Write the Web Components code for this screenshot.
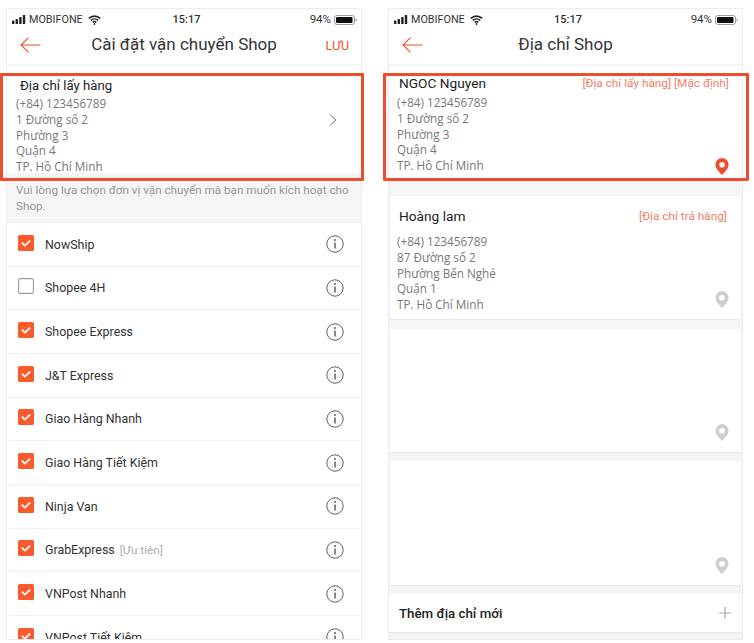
<!DOCTYPE html>
<html lang="vi">
<head>
<meta charset="utf-8">
<title>Shop</title>
<style>
	html, body { margin: 0; background: #fff; }
	body { font-family: Roboto, "Noto Sans", sans-serif; color: #222; }
	main { display: flex; gap: 26px; padding: 8px 0 0 6px; }
</style>
</head>
<body>
<main>
	<phone-frame style="--w: 356px">
		<status-bar></status-bar>
		<nav-bar action="LƯU">Cài đặt vận chuyển Shop</nav-bar>
		<pickup-row>
			<span slot="title">Địa chỉ lấy hàng</span>
			(+84) 123456789<br>1 Đường số 2<br>Phường 3<br>Quận 4<br>TP. Hồ Chí Minh
		</pickup-row>
		<hint-box>Vui lòng lựa chọn đơn vị vận chuyển mà bạn muốn kích hoạt cho Shop.</hint-box>
		<carrier-row checked>NowShip</carrier-row>
		<carrier-row>Shopee 4H</carrier-row>
		<carrier-row checked>Shopee Express</carrier-row>
		<carrier-row checked>J&amp;T Express</carrier-row>
		<carrier-row checked>Giao Hàng Nhanh</carrier-row>
		<carrier-row checked>Giao Hàng Tiết Kiệm</carrier-row>
		<carrier-row checked>Ninja Van</carrier-row>
		<carrier-row checked note="[Ưu tiên]">GrabExpress</carrier-row>
		<carrier-row checked>VNPost Nhanh</carrier-row>
		<carrier-row checked>VNPost Tiết Kiệm</carrier-row>
		<red-box slot="over" style="--l: -6px; --r: -2px"></red-box>
	</phone-frame>
	<phone-frame style="--w: 355px">
		<status-bar></status-bar>
		<nav-bar>Địa chỉ Shop</nav-bar>
		<address-card first active h="116" top="2" gap="3" name="NGOC Nguyen" tag="[Địa chỉ lấy hàng] [Mặc định]">
			(+84) 123456789<br>1 Đường số 2<br>Phường 3<br>Quận 4<br>TP. Hồ Chí Minh
		</address-card>
		<address-card h="124" top="14" name="Hoàng lam" tag="[Địa chỉ trả hàng]" gap="9">
			(+84) 123456789<br>87 Đường số 2<br>Phường Bến Nghé<br>Quận 1<br>TP. Hồ Chí Minh
		</address-card>
		<address-card h="124" top="9"></address-card>
		<address-card h="125" top="8"></address-card>
		<add-row>Thêm địa chỉ mới</add-row>
		<red-box slot="over" style="--l: -5px; --r: -6px"></red-box>
	</phone-frame>
</main>
<script>
class PhoneFrame extends HTMLElement {
	constructor() {
		super();
		this.attachShadow({ mode: 'open' }).innerHTML = `
			<style>
				:host { display: block; position: relative; width: var(--w); height: 632px; flex: none; }
				.screen {
					box-sizing: border-box;
					height: 100%;
					overflow: hidden;
					background: #f5f5f5;
					border: 1px solid #ededed;
					display: flex;
					flex-direction: column;
				}
			</style>
			<div class="screen"><slot></slot></div>
			<slot name="over"></slot>
		`;
	}
}

class StatusBar extends HTMLElement {
	constructor() {
		super();
		this.attachShadow({ mode: 'open' }).innerHTML = `
			<style>
				:host {
					display: grid;
					grid-template-columns: 1fr auto 1fr;
					align-items: center;
					height: 21px;
					padding: 0 4px 0 5px;
					background: #fff;
					font: 11.5px/21px Roboto, sans-serif;
					color: #333;
				}
				.left, .right { display: flex; align-items: center; }
				.left { gap: 3px; }
				.right { justify-content: flex-end; gap: 3px; }
				.brand { font-size: 10.8px; }
				.left svg:last-child { margin-left: 2px; }
				.time { font-weight: 500; font-size: 11px; margin-left: 4px; }
			</style>
			<div class="left">
				<svg width="14" height="9" viewBox="0 0 14 9" fill="#222">
					<rect x="0" y="5.5" width="2.4" height="3.5" rx=".6"/><rect x="3.6" y="4" width="2.4" height="5" rx=".6"/>
					<rect x="7.2" y="2" width="2.4" height="7" rx=".6"/><rect x="10.8" y="0" width="2.4" height="9" rx=".6"/>
				</svg>
				<span class="brand">MOBIFONE</span>
				<svg width="13" height="10" viewBox="0 0 13 10" fill="none" stroke="#222" stroke-width="1.6">
					<path d="M.8 3.4a8.2 8.2 0 0 1 11.4 0M2.8 5.4a5.4 5.4 0 0 1 7.4 0M4.7 7.3a2.7 2.7 0 0 1 3.6 0"/>
					<circle cx="6.5" cy="9" r=".9" fill="#222" stroke="none"/>
				</svg>
			</div>
			<span class="time">15:17</span>
			<div class="right">
				<span>94%</span>
				<svg width="23" height="10" viewBox="0 0 23 10">
					<rect x=".5" y=".5" width="20" height="9" rx="2.4" fill="none" stroke="#999"/>
					<rect x="2" y="2" width="16.5" height="6" rx="1" fill="#111"/>
					<path d="M21.5 3.2c.9.2 1.3.9 1.3 1.8s-.4 1.6-1.3 1.8z" fill="#aaa"/>
				</svg>
			</div>
		`;
	}
}

class NavBar extends HTMLElement {
	constructor() {
		super();
		const action = this.getAttribute('action') || '';
		this.attachShadow({ mode: 'open' }).innerHTML = `
			<style>
				:host {
					display: grid;
					grid-template-columns: 64px 1fr 64px;
					align-items: center;
					box-sizing: border-box;
					height: 34px;
					padding-bottom: 6px;
					background: #fff;
					flex: none;
				}
				svg { margin: 2px 0 0 13px; }
				.title { text-align: center; font: 17px Roboto, "Noto Sans", sans-serif; color: #333; white-space: nowrap; }
				.action { text-align: right; padding: 2px 12px 0 0; font: 12.5px Roboto, sans-serif; color: #f0522d; }
			</style>
			<svg width="21" height="16" viewBox="0 0 21 16" fill="none" stroke="#ee4d2d" stroke-width="1.1">
				<path d="M20.5 8H1M8.5.6 1 8l7.5 7.4"/>
			</svg>
			<div class="title"><slot></slot></div>
			<div class="action">${action}</div>
		`;
	}
}

const addressLines = `
	.lines { font: 11.7px/15.8px "Open Sans", "Noto Sans", sans-serif; color: #777; white-space: nowrap; }
	.name { font: 13.7px/18px Roboto, "Noto Sans", sans-serif; color: #222; }
`;

class PickupRow extends HTMLElement {
	constructor() {
		super();
		this.attachShadow({ mode: 'open' }).innerHTML = `
			<style>
				${addressLines}
				:host {
					display: grid;
					grid-template-columns: 1fr auto;
					align-items: center;
					box-sizing: border-box;
					height: 107px;
					margin-top: 2px;
					padding: 11px 24px 0 9px;
					background: #fff;
					flex: none;
				}
				.name { margin: 0 0 1px 4px; font-size: 13.2px; }
				svg { margin-bottom: 11px; }
			</style>
			<div>
				<div class="name"><slot name="title"></slot></div>
				<div class="lines"><slot></slot></div>
			</div>
			<svg width="8" height="12" viewBox="0 0 8 12" fill="none" stroke="#77778c" stroke-width="1">
				<path d="M1 .5l6 5.500-6 5.500"/>
			</svg>
		`;
	}
}

class HintBox extends HTMLElement {
	constructor() {
		super();
		this.attachShadow({ mode: 'open' }).innerHTML = `
			<style>
				:host {
					display: block;
					box-sizing: border-box;
					height: 49px;
					padding: 9px 9px 0;
					background: #f5f5f5;
					font: 11.7px/16px Roboto, "Noto Sans", sans-serif;
					color: #979797;
					flex: none;
				}
			</style>
			<slot></slot>
		`;
	}
}

class CarrierRow extends HTMLElement {
	constructor() {
		super();
		const note = this.getAttribute('note');
		const box = this.hasAttribute('checked')
			? `<svg width="16" height="16" viewBox="0 0 16 16"><rect width="16" height="16" rx="1.5" fill="#fb5a2c"/><path d="M3.800 7.600 6.900 10.600 12.200 5.600" fill="none" stroke="#fff" stroke-width="1.8"/></svg>`
			: `<svg width="16" height="16" viewBox="0 0 16 16"><rect x=".6" y=".6" width="14.800" height="14.800" rx="1.500" fill="#fff" stroke="#9c9cac" stroke-width="1.1"/></svg>`;
		this.attachShadow({ mode: 'open' }).innerHTML = `
			<style>
				:host {
					display: flex;
					align-items: center;
					box-sizing: border-box;
					height: 43.67px;
					padding: 0 17px 0 11px;
					background: #fff;
					border-top: 1px solid #efefef;
					font: 12.4px Roboto, "Noto Sans", sans-serif;
					color: #333;
					flex: none;
				}
				.box { display: flex; margin-bottom: 3px; }
				.label { flex: 1; margin-left: 11px; white-space: nowrap; }
				.note { color: #aaa; font-size: 11.7px; margin-left: 2px; }
			</style>
			<span class="box">${box}</span>
			<div class="label"><slot></slot>${note ? ` <span class="note">${note}</span>` : ''}</div>
			<svg width="18" height="18" viewBox="0 0 18 18" fill="none" stroke="#5c5c70" stroke-width="1">
				<circle cx="9" cy="9" r="8.200"/>
				<path d="M9 7.600v6" stroke-width="1.500"/>
				<circle cx="9" cy="4.900" r="1" fill="#5c5c70" stroke="none"/>
			</svg>
		`;
	}
}

class AddressCard extends HTMLElement {
	constructor() {
		super();
		const name = this.getAttribute('name');
		const tag = this.getAttribute('tag');
		const h = this.getAttribute('h');
		const top = this.getAttribute('top');
		const gap = this.getAttribute('gap') || 2;
		const first = this.hasAttribute('first');
		const pin = this.hasAttribute('active') ? '#ee4d2d' : '#cfcfcf';
		const head = name ? `
			<div class="head"><span class="name">${name}</span><span class="tag">${tag}</span></div>
			<div class="lines"><slot></slot></div>` : '<div class="head"></div><div></div>';
		this.attachShadow({ mode: 'open' }).innerHTML = `
			<style>
				${addressLines}
				:host {
					display: grid;
					grid-template-columns: 1fr auto;
					grid-template-rows: auto minmax(0, 1fr);
					box-sizing: border-box;
					height: ${h}px;
					margin: ${top}px ${first ? 0 : 1}px 0;
					padding: ${first ? 8 : 11}px ${first ? 13 : 12}px ${first ? 6 : 11}px ${first ? 8 : 7}px;
					background: #fff;
					border-bottom: 1px solid #e8e8e8;
					flex: none;
				}
				.head {
					grid-column: 1 / -1;
					display: flex;
					justify-content: space-between;
					align-items: center;
					padding: 0 ${first ? 0 : 2}px ${gap}px 2px;
				}
				.tag { font: 11.8px Roboto, "Noto Sans", sans-serif; color: #f47c66; white-space: nowrap; }
				svg { align-self: end; }
			</style>
			${head}
			<svg width="14" height="17" viewBox="0 0 14 17">
				<path fill-rule="evenodd" fill="${pin}" d="M7 0a6.600 6.600 0 0 1 6.600 6.600C13.600 10.600 9.500 14.500 7 17 4.500 14.500.4 10.600.4 6.600A6.600 6.600 0 0 1 7 0zm0 3.900a2.800 2.800 0 1 0 0 5.600 2.800 2.800 0 0 0 0-5.600z"/>
			</svg>
		`;
	}
}

class AddRow extends HTMLElement {
	constructor() {
		super();
		this.attachShadow({ mode: 'open' }).innerHTML = `
			<style>
				:host {
					display: flex;
					justify-content: space-between;
					align-items: center;
					box-sizing: border-box;
					height: 39px;
					margin-top: 8px;
					padding: 0 11px 0 10px;
					background: #fff;
					border-bottom: 1px solid #e8e8e8;
					font: 500 13.3px Roboto, "Noto Sans", sans-serif;
					color: #222;
					flex: none;
				}
			</style>
			<span><slot></slot></span>
			<svg width="12" height="12" viewBox="0 0 12 12" stroke="#aaa" stroke-width="1.200"><path d="M6 0v12M0 6h12"/></svg>
		`;
	}
}

class RedBox extends HTMLElement {
	constructor() {
		super();
		this.attachShadow({ mode: 'open' }).innerHTML = `
			<style>
				:host {
					position: absolute;
					left: var(--l);
					right: var(--r);
					top: 65px;
					height: 108px;
					box-sizing: border-box;
					border: 3px solid #ee4d2d;
					border-radius: 1px;
					pointer-events: none;
				}
			</style>
		`;
	}
}

customElements.define('phone-frame', PhoneFrame);
customElements.define('status-bar', StatusBar);
customElements.define('nav-bar', NavBar);
customElements.define('pickup-row', PickupRow);
customElements.define('hint-box', HintBox);
customElements.define('carrier-row', CarrierRow);
customElements.define('address-card', AddressCard);
customElements.define('add-row', AddRow);
customElements.define('red-box', RedBox);
</script>
</body>
</html>
